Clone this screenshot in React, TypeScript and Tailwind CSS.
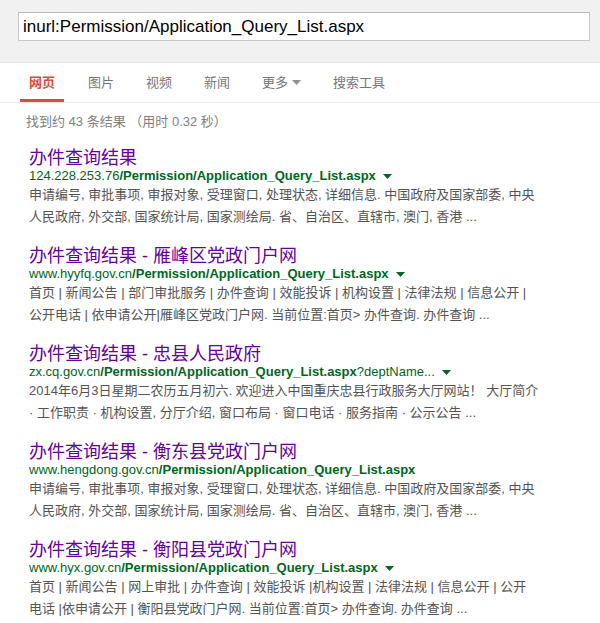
const font = { fontFamily: '"Liberation Sans", Arial, "Noto Sans CJK SC", sans-serif' }

type Result = {
  title: string
  host: string
  path: string
  extra?: string
  caret: boolean
  lines: [string, string]
}

const results: Result[] = [
  {
    title: '办件查询结果',
    host: '124.228.253.76',
    path: '/Permission/Application_Query_List.aspx',
    caret: true,
    lines: [
      '申请编号, 审批事项, 审报对象, 受理窗口, 处理状态, 详细信息. 中国政府及国家部委, 中央',
      '人民政府, 外交部, 国家统计局, 国家测绘局. 省、自治区、直辖市, 澳门, 香港 ...',
    ],
  },
  {
    title: '办件查询结果 - 雁峰区党政门户网',
    host: 'www.hyyfq.gov.cn',
    path: '/Permission/Application_Query_List.aspx',
    caret: true,
    lines: [
      '首页 | 新闻公告 | 部门审批服务 | 办件查询 | 效能投诉 | 机构设置 | 法律法规 | 信息公开 |',
      '公开电话 | 依申请公开|雁峰区党政门户网. 当前位置:首页> 办件查询. 办件查询 ...',
    ],
  },
  {
    title: '办件查询结果 - 忠县人民政府',
    host: 'zx.cq.gov.cn',
    path: '/Permission/Application_Query_List.aspx',
    extra: '?deptName...',
    caret: true,
    lines: [
      '2014年6月3日星期二农历五月初六. 欢迎进入中国重庆忠县行政服务大厅网站！ 大厅简介',
      '· 工作职责 · 机构设置, 分厅介绍, 窗口布局 · 窗口电话 · 服务指南 · 公示公告 ...',
    ],
  },
  {
    title: '办件查询结果 - 衡东县党政门户网',
    host: 'www.hengdong.gov.cn',
    path: '/Permission/Application_Query_List.aspx',
    caret: false,
    lines: [
      '申请编号, 审批事项, 审报对象, 受理窗口, 处理状态, 详细信息. 中国政府及国家部委, 中央',
      '人民政府, 外交部, 国家统计局, 国家测绘局. 省、自治区、直辖市, 澳门, 香港 ...',
    ],
  },
  {
    title: '办件查询结果 - 衡阳县党政门户网',
    host: 'www.hyx.gov.cn',
    path: '/Permission/Application_Query_List.aspx',
    caret: true,
    lines: [
      '首页 | 新闻公告 | 网上审批 | 办件查询 | 效能投诉 |机构设置 | 法律法规 | 信息公开 | 公开',
      '电话 |依申请公开 | 衡阳县党政门户网. 当前位置:首页> 办件查询. 办件查询 ...',
    ],
  },
]

const tabs = ['网页', '图片', '视频', '新闻', '更多', '搜索工具']

function Caret({ className }: { className: string }) {
  return (
    <svg width="9" height="5" viewBox="0 0 9 5" className={className}>
      <path d="M0 0h9L4.5 5z" fill="currentColor" />
    </svg>
  )
}

function App() {
  return (
    <div className="min-h-[623px] w-[600px] overflow-hidden bg-white" style={font}>
      <header className="h-[63px] border-b border-[#e5e5e5] bg-[#f1f1f1] pl-[18px] pt-[12px]">
        <div className="flex h-[29px] w-[572px] items-center border border-[#c8c8c8] border-t-[#b9b9b9] bg-white pl-[4px] text-[17px] text-black">
          inurl:Permission/Application_Query_List.aspx
        </div>
      </header>

      <nav className="flex h-[40px] items-end border-b border-[#ebebeb] pl-[20px] text-[13px] text-[#777]">
        {tabs.map((t, i) => (
          <div
            key={t}
            className={
              i === 0
                ? 'mr-[24px] flex h-[40px] w-[44px] items-center justify-center border-b-[3px] border-[#dd4b39] pt-[4px] font-bold text-[#dd4b39]'
                : 'mr-[32px] flex h-[40px] items-center pt-[4px] pb-[3px]'
            }
          >
            {t}
            {t === '更多' && <Caret className="ml-[4px] text-[#909090]" />}
          </div>
        ))}
      </nav>

      <div className="pl-[26px] pt-[11px] text-[13px] leading-[16px] text-[#808080]">
        找到约 43 条结果 （用时 0.32 秒）
      </div>

      <main className="pl-[29px] pt-[19px]">
        {results.map((r) => (
          <div key={r.title} className="mb-[19px]">
            <div className="text-[18px] leading-[19px] text-[#660099]">{r.title}</div>
            <div className="flex items-center text-[13px] leading-[16px] text-[#006621]">
              <span>{r.host}</span>
              <span className="font-bold">{r.path}</span>
              {r.extra && <span>{r.extra}</span>}
              {r.caret && <Caret className="ml-[7px] text-[#006621]" />}
            </div>
            <div className="text-[13px] leading-[22px] text-[#545454]">
              <div className="whitespace-nowrap">{r.lines[0]}</div>
              <div className="whitespace-nowrap">{r.lines[1]}</div>
            </div>
          </div>
        ))}
      </main>
    </div>
  )
}

export default App
